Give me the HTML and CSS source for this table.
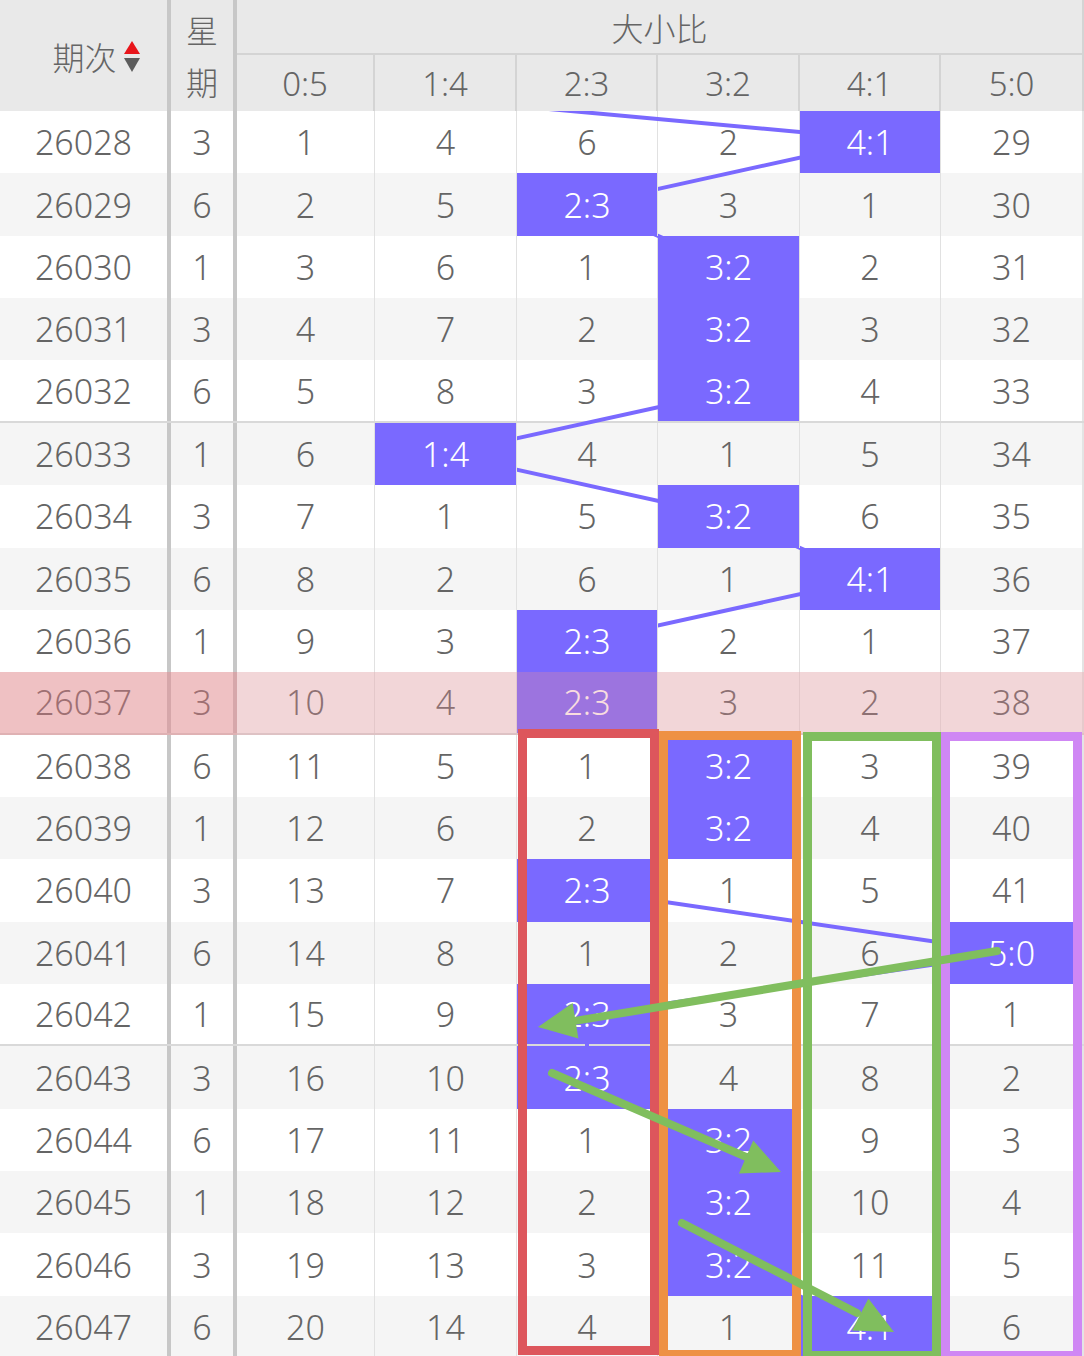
FILE: index.html
```html
<!DOCTYPE html>
<html lang="zh-CN">
<head>
<meta charset="utf-8">
<title>大小比走势</title>
<link rel="stylesheet" href="styles.css">
</head>
<body>
<div class="table">
  <div class="head">
    <div class="h-qici">期次<svg class="sort" width="18" height="36" viewBox="0 0 18 36"><polygon points="9,2 17,15 1,15" fill="#e8151b"/><polygon points="1,19 17,19 9,33" fill="#5c5c5c"/></svg></div>
    <div class="h-week"><span>星</span><span>期</span></div>
    <div class="h-group">大小比</div>
    <div class="h-sub">0:5</div>
    <div class="h-sub">1:4</div>
    <div class="h-sub">2:3</div>
    <div class="h-sub">3:2</div>
    <div class="h-sub">4:1</div>
    <div class="h-sub last">5:0</div>
  </div>
  <div class="body">
    <div class="rows">
      <div class="row"><div class="c p">26028</div><div class="c w">3</div><div class="c">1</div><div class="c">4</div><div class="c">6</div><div class="c">2</div><div class="c hit">4:1</div><div class="c last">29</div></div>
      <div class="row"><div class="c p">26029</div><div class="c w">6</div><div class="c">2</div><div class="c">5</div><div class="c hit">2:3</div><div class="c">3</div><div class="c">1</div><div class="c last">30</div></div>
      <div class="row"><div class="c p">26030</div><div class="c w">1</div><div class="c">3</div><div class="c">6</div><div class="c">1</div><div class="c hit">3:2</div><div class="c">2</div><div class="c last">31</div></div>
      <div class="row"><div class="c p">26031</div><div class="c w">3</div><div class="c">4</div><div class="c">7</div><div class="c">2</div><div class="c hit">3:2</div><div class="c">3</div><div class="c last">32</div></div>
      <div class="row sep"><div class="c p">26032</div><div class="c w">6</div><div class="c">5</div><div class="c">8</div><div class="c">3</div><div class="c hit">3:2</div><div class="c">4</div><div class="c last">33</div></div>
      <div class="row"><div class="c p">26033</div><div class="c w">1</div><div class="c">6</div><div class="c hit">1:4</div><div class="c">4</div><div class="c">1</div><div class="c">5</div><div class="c last">34</div></div>
      <div class="row"><div class="c p">26034</div><div class="c w">3</div><div class="c">7</div><div class="c">1</div><div class="c">5</div><div class="c hit">3:2</div><div class="c">6</div><div class="c last">35</div></div>
      <div class="row"><div class="c p">26035</div><div class="c w">6</div><div class="c">8</div><div class="c">2</div><div class="c">6</div><div class="c">1</div><div class="c hit">4:1</div><div class="c last">36</div></div>
      <div class="row"><div class="c p">26036</div><div class="c w">1</div><div class="c">9</div><div class="c">3</div><div class="c hit">2:3</div><div class="c">2</div><div class="c">1</div><div class="c last">37</div></div>
      <div class="row sep"><div class="c p">26037</div><div class="c w">3</div><div class="c">10</div><div class="c">4</div><div class="c hit">2:3</div><div class="c">3</div><div class="c">2</div><div class="c last">38</div></div>
      <div class="row"><div class="c p">26038</div><div class="c w">6</div><div class="c">11</div><div class="c">5</div><div class="c">1</div><div class="c hit">3:2</div><div class="c">3</div><div class="c last">39</div></div>
      <div class="row"><div class="c p">26039</div><div class="c w">1</div><div class="c">12</div><div class="c">6</div><div class="c">2</div><div class="c hit">3:2</div><div class="c">4</div><div class="c last">40</div></div>
      <div class="row"><div class="c p">26040</div><div class="c w">3</div><div class="c">13</div><div class="c">7</div><div class="c hit">2:3</div><div class="c">1</div><div class="c">5</div><div class="c last">41</div></div>
      <div class="row"><div class="c p">26041</div><div class="c w">6</div><div class="c">14</div><div class="c">8</div><div class="c">1</div><div class="c">2</div><div class="c">6</div><div class="c last hit">5:0</div></div>
      <div class="row sep"><div class="c p">26042</div><div class="c w">1</div><div class="c">15</div><div class="c">9</div><div class="c hit">2:3</div><div class="c">3</div><div class="c">7</div><div class="c last">1</div></div>
      <div class="row"><div class="c p">26043</div><div class="c w">3</div><div class="c">16</div><div class="c">10</div><div class="c hit">2:3</div><div class="c">4</div><div class="c">8</div><div class="c last">2</div></div>
      <div class="row"><div class="c p">26044</div><div class="c w">6</div><div class="c">17</div><div class="c">11</div><div class="c">1</div><div class="c hit">3:2</div><div class="c">9</div><div class="c last">3</div></div>
      <div class="row"><div class="c p">26045</div><div class="c w">1</div><div class="c">18</div><div class="c">12</div><div class="c">2</div><div class="c hit">3:2</div><div class="c">10</div><div class="c last">4</div></div>
      <div class="row"><div class="c p">26046</div><div class="c w">3</div><div class="c">19</div><div class="c">13</div><div class="c">3</div><div class="c hit">3:2</div><div class="c">11</div><div class="c last">5</div></div>
      <div class="row"><div class="c p">26047</div><div class="c w">6</div><div class="c">20</div><div class="c">14</div><div class="c">4</div><div class="c">1</div><div class="c hit">4:1</div><div class="c last">6</div></div>
    </div>

    <svg class="lines" width="1084" height="1248" viewBox="0 111 1084 1248">
      <line x1="540" y1="108.2" x2="870" y2="138.4" stroke="#7a69ff" stroke-width="4"/>
      <polyline fill="none" stroke="#7a69ff" stroke-width="4" stroke-linejoin="round"
        points="870,142.2 587,204.6 728.5,266.9 728.5,329.3 728.5,391.7 445.5,454.0 728.5,516.4 870,578.8 587,641.1 587,703.5 728.5,765.9 728.5,828.2 587,890.6 1012.5,953.0 587,1015.3 587,1077.7 728.5,1140.1 728.5,1202.4 728.5,1264.8 870,1327.2"/>
    </svg>

    <div class="pink"><div class="pink-left"></div></div>

    <div class="box red"></div>
    <div class="box orange"></div>
    <div class="box green"></div>
    <div class="box violet"></div>

    <svg class="arrows" width="1084" height="1248" viewBox="0 111 1084 1248">
      <g stroke="#80be5e" stroke-width="8" stroke-linecap="round" fill="none">
        <line x1="997" y1="951" x2="572" y2="1021.4"/>
        <line x1="552" y1="1073" x2="750" y2="1158.6"/>
        <line x1="682" y1="1223" x2="857" y2="1313"/>
      </g>
      <g fill="#80be5e">
        <polygon points="538,1027 578.4,1038.6 572.6,1003"/>
        <polygon points="781,1172 753.2,1140.4 739,1173.4"/>
        <polygon points="894,1332 868.4,1298.6 852,1330.6"/>
      </g>
    </svg>
  </div>
</div>
</body>
</html>
```
FILE: styles.css
```css
:root {
  --cols: 171px 66px 138px 142px 141px 142px 141px 143px;
  --rowh: 62.37px;
  --hit: #7a69ff;
}

html, body {
  margin: 0;
  padding: 0;
  background: #ffffff;
  overflow: hidden;
}

body {
  font-family: "Noto Sans", "Noto Sans CJK SC", sans-serif;
  font-weight: 300;
  color: #656565;
}

.table {
  width: 1084px;
  position: relative;
}

/* ---------- header ---------- */
.head {
  display: grid;
  grid-template-columns: var(--cols);
  grid-template-rows: 55px 56px;
  background: #e9e9e9;
  position: relative;
  z-index: 10;
}

.h-qici {
  grid-row: 1 / 3;
  grid-column: 1;
  border-right: 4px solid #c7c7c7;
  display: flex;
  align-items: center;
  justify-content: center;
  padding-left: 26px;
  font-family: "Noto Sans CJK SC", sans-serif;
  font-size: 32px;
}

.sort {
  margin-left: 6px;
  margin-top: 2px;
}

.h-week {
  grid-row: 1 / 3;
  grid-column: 2;
  border-right: 4px solid #c7c7c7;
  display: flex;
  flex-direction: column;
  align-items: center;
  justify-content: center;
  padding-bottom: 2px;
  font-family: "Noto Sans CJK SC", sans-serif;
  font-size: 32px;
  line-height: 52px;
}

.h-group {
  grid-row: 1;
  grid-column: 3 / 9;
  border-bottom: 2px solid #d4d4d4;
  border-right: 2px solid #d4d4d4;
  display: flex;
  align-items: center;
  justify-content: center;
  font-family: "Noto Sans CJK SC", sans-serif;
  font-size: 32px;
}

.h-sub {
  grid-row: 2;
  border-right: 2px solid #d4d4d4;
  display: flex;
  align-items: center;
  justify-content: center;
  font-size: 33px;
}

/* ---------- body ---------- */
.body {
  position: relative;
  overflow: hidden;
}

.row {
  display: grid;
  grid-template-columns: var(--cols);
  height: var(--rowh);
  box-sizing: border-box;
  background: #ffffff;
}

.row:nth-child(even) {
  background: #f5f5f5;
}

.row.sep {
  border-bottom: 2px solid #d9d9d9;
}

.c {
  display: flex;
  align-items: center;
  justify-content: center;
  font-size: 34px;
  border-right: 1px solid #e1e1e1;
}

.c.p,
.c.w {
  border-right: 4px solid #c7c7c7;
}

.c.last {
  border-right: 2px solid #e4e4e4;
}

.c.hit {
  background-clip: padding-box;
  background-color: var(--hit);
  color: #ffffff;
  position: relative;
  z-index: 2;
}

.lines {
  position: absolute;
  left: 0;
  top: 0;
  z-index: 1;
}

.pink {
  position: absolute;
  left: 0;
  right: 0;
  top: calc(var(--rowh) * 9);
  height: var(--rowh);
  background: rgba(235, 142, 148, 0.3);
  z-index: 3;
}

.pink-left {
  width: 237px;
  height: 100%;
  background: rgba(230, 110, 115, 0.2);
}

.box {
  position: absolute;
  box-sizing: border-box;
  border: 9px solid;
  z-index: 4;
}

.box.red {
  left: 518px;
  top: 618px;
  width: 141px;
  height: 626px;
  border-color: #dd565c;
}

.box.orange {
  left: 659px;
  top: 620px;
  width: 142px;
  height: 628px;
  border-color: #ee9144;
}

.box.green {
  left: 803px;
  top: 621px;
  width: 138px;
  height: 628px;
  border-color: #80be5e;
}

.box.violet {
  left: 941px;
  top: 621px;
  width: 141px;
  height: 628px;
  border-color: #cf87f4;
}

.arrows {
  position: absolute;
  left: 0;
  top: 0;
  z-index: 5;
}
```
